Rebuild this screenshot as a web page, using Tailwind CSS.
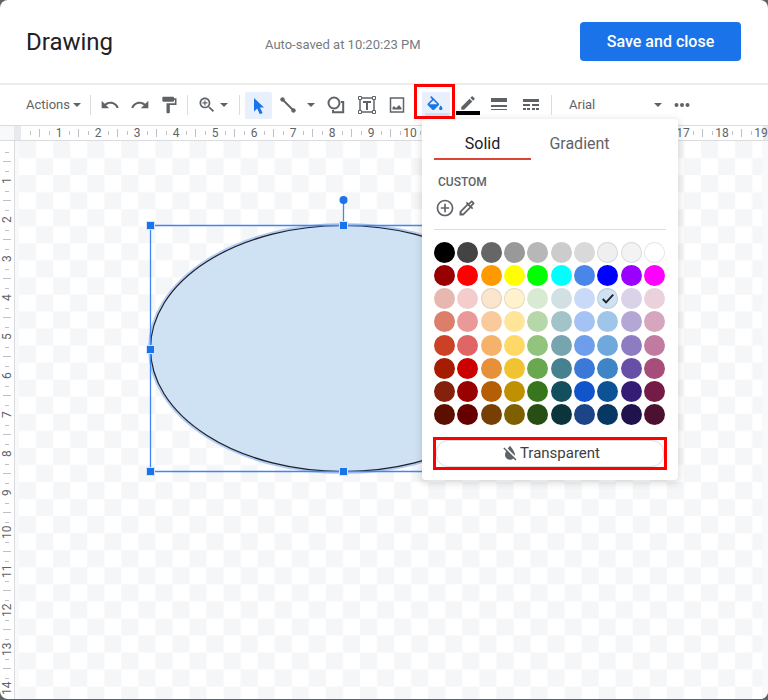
<!DOCTYPE html>
<html lang="en">
<head>
    <meta charset="utf-8"/>
    <meta content="width=device-width, initial-scale=1.0" name="viewport"/>
    <title>Drawing</title>
    <script src="https://cdn.jsdelivr.net/npm/@tailwindcss/browser@4"></script>
</head>
<body class="flex h-screen flex-col bg-[#5f6368] pb-px font-['Roboto',sans-serif] text-[#5f6368]">
    <main class="flex min-h-0 flex-1 flex-col overflow-hidden rounded-lg bg-white">
        <!-- Header -->
        <header class="flex h-[85px] shrink-0 items-center border-b-2 border-[#ededed] pl-[26px] pr-[27px]">
            <h1 class="w-[239px] text-2xl text-[#202124]">Drawing</h1>
            <p class="mt-[6px] text-[13px] text-[#777b80]">Auto-saved at 10:20:23 PM</p>
            <button class="ml-auto h-[39px] w-[161px] rounded bg-[#1a73e8] text-base font-medium text-white">Save and close</button>
        </header>

        <!-- Toolbar -->
        <div class="flex h-10 shrink-0 items-center">
            <button class="ml-[26px] flex w-14 items-center gap-[3px] text-[13px]">Actions
                <svg class="h-1 w-2 shrink-0" viewBox="0 0 8 4" fill="currentColor"><path d="M0 0h8L4 4z"/></svg>
            </button>
            <div class="ml-2 h-5 w-px bg-[#dadce0]"></div>
            <button class="ml-[9px]" aria-label="Undo">
                <svg class="size-5" viewBox="0 0 24 24" fill="currentColor"><path d="M12.500 8c-2.650 0-5.050.990-6.900 2.600L2 7v9h9l-3.620-3.620c1.390-1.160 3.160-1.880 5.120-1.880 3.540 0 6.550 2.310 7.600 5.500l2.370-.780C21.080 11.030 17.150 8 12.500 8z"/></svg>
            </button>
            <button class="ml-[10px]" aria-label="Redo">
                <svg class="size-5" viewBox="0 0 24 24" fill="currentColor"><path d="M18.400 10.600C16.550 8.990 14.150 8 11.500 8c-4.650 0-8.580 3.030-9.960 7.220L3.900 16c1.050-3.190 4.050-5.500 7.600-5.500 1.950 0 3.730.720 5.120 1.880L13 16h9V7l-3.600 3.600z"/></svg>
            </button>
            <button class="ml-[9px]" aria-label="Paint format">
                <svg class="size-5" viewBox="0 0 24 24" fill="currentColor"><path d="M18 4V3c0-.55-.45-1-1-1H5c-.55 0-1 .45-1 1v4c0 .55.45 1 1 1h12c.55 0 1-.45 1-1V6h1v4H9v11c0 .55.45 1 1 1h2c.55 0 1-.45 1-1v-9h8V4h-3z"/></svg>
            </button>
            <div class="ml-2 h-5 w-px bg-[#dadce0]"></div>
            <button class="ml-[9px] flex items-center gap-[3px]" aria-label="Zoom">
                <svg class="size-5" viewBox="0 0 24 24" fill="currentColor"><path d="M15.5 14h-.79l-.28-.27C15.41 12.59 16 11.11 16 9.5 16 5.91 13.09 3 9.5 3S3 5.91 3 9.500 5.910 16 9.500 16c1.610 0 3.090-.590 4.230-1.570l.270.280v.790l5 4.990L20.490 19l-4.990-5zm-6 0C7.010 14 5 11.990 5 9.500S7.010 5 9.500 5 14 7.010 14 9.500 11.990 14 9.500 14zM12.500 10.200h-2.300v2.300H8.800v-2.300H6.500V8.800h2.300V6.500h1.400v2.300h2.300z"/></svg>
                <svg class="h-1 w-2" viewBox="0 0 8 4" fill="currentColor"><path d="M0 0h8L4 4z"/></svg>
            </button>
            <div class="ml-[11px] h-5 w-px bg-[#dadce0]"></div>
            <button class="ml-[5px] size-[27px] rounded-xs bg-[#e8f0fe]" aria-label="Select">
                <svg class="size-[27px] text-[#1a73e8]" viewBox="0 0 27 27" fill="currentColor"><path d="M9 6v13.500l3.200-3 2.600 5.700 2.800-1.200-2.600-5.500H19z"/></svg>
            </button>
            <button class="ml-[6px]" aria-label="Line">
                <svg class="size-5" viewBox="0 0 20 20" fill="currentColor" stroke="currentColor"><path stroke-width="2" d="M4 4l12 12"/><circle cx="4.500" cy="4.500" r="1.800"/><circle cx="15.500" cy="15.500" r="1.800"/></svg>
            </button>
            <button class="ml-[9px]" aria-label="Line type">
                <svg class="h-1 w-2" viewBox="0 0 8 4" fill="currentColor"><path d="M0 0h8L4 4z"/></svg>
            </button>
            <button class="ml-[11px]" aria-label="Shape">
                <svg class="size-5" viewBox="0 0 20 20" fill="none" stroke="currentColor" stroke-width="2"><circle cx="8" cy="8" r="5.500"/><path d="M15 7h2.200v10.200H7V15"/></svg>
            </button>
            <button class="ml-[11px]" aria-label="Text box">
                <svg class="size-5" viewBox="0 0 20 20" fill="none" stroke="currentColor"><path stroke-width="1.500" d="M3 3h14v14H3z"/><path stroke-width="2" d="M6 7h8M10 7v8"/><path stroke-width="1" fill="white" d="M1.500 1.500h3v3h-3zM15.500 1.500h3v3h-3zM1.500 15.500h3v3h-3zM15.500 15.500h3v3h-3z"/></svg>
            </button>
            <button class="ml-[10px]" aria-label="Image">
                <svg class="size-5" viewBox="0 0 20 20" fill="currentColor"><path fill="none" stroke="currentColor" stroke-width="1.500" d="M3.500 3h13v14h-13z"/><path d="M5.500 14.500v-2l1.500-1.500 2 2 3-3 2.500 3v1.500z"/></svg>
            </button>

            <!-- Fill color with its open menu -->
            <div class="relative z-10 ml-[15px]">
                <button class="block h-[27px] w-7 rounded-xs bg-[#e8f0fe]" aria-label="Fill color">
                    <svg class="h-[27px] w-7 text-[#1a73e8]" viewBox="0 0 28 27" fill="currentColor"><path fill="#cfe2f3" d="M3 21h24v3H3z"/><path transform="translate(3 4) scale(.83)" d="M16.560 8.940L7.620 0 6.210 1.410l2.380 2.380-5.150 5.150c-.590.590-.590 1.540 0 2.120l5.500 5.500c.290.290.680.440 1.060.440s.770-.150 1.060-.440l5.500-5.500c.590-.580.590-1.530 0-2.120zM5.210 10L10 5.210 14.790 10H5.210zM19 11.500s-2 2.170-2 3.500c0 1.100.900 2 2 2s2-.900 2-2c0-1.330-2-3.500-2-3.500z"/></svg>
                </button>
                <div class="pointer-events-none absolute -left-2 -top-2 h-[35px] w-[41px] border-3 border-[#ff0000]"></div>

                <div class="absolute left-0 top-[27px] w-64 rounded bg-white px-3 pb-[10px] shadow-[0_2px_6px_2px_rgba(60,64,67,0.15)]">
                    <div class="flex h-[41px] pr-[36px] text-base" role="tablist">
                        <button role="tab" aria-selected="true" class="w-[97px] border-b-2 border-[#db4437] pt-3 text-[#202124]">Solid</button>
                        <button role="tab" aria-selected="false" class="w-[97px] border-b-2 border-transparent pt-3">Gradient</button>
                    </div>
                    <h2 class="mt-[14px] pl-1 text-xs font-medium leading-4">CUSTOM</h2>
                    <div class="flex h-[40px] gap-[2px] border-b border-[#dadce0] pl-px pt-[8px]">
                        <button class="size-5" aria-label="Add a custom color">
                            <svg class="size-5" viewBox="0 0 24 24" fill="currentColor"><path d="M13 7h-2v4H7v2h4v4h2v-4h4v-2h-4V7zm-1-5C6.480 2 2 6.480 2 12s4.480 10 10 10 10-4.480 10-10S17.520 2 12 2zm0 18c-4.410 0-8-3.590-8-8s3.590-8 8-8 8 3.590 8 8-3.590 8-8 8z"/></svg>
                        </button>
                        <button class="size-5" aria-label="Pick a color">
                            <svg class="size-5" viewBox="0 0 24 24" fill="currentColor"><path d="M17.660 5.410l.920.920-2.690 2.690-.920-.920 2.690-2.690M17.670 3c-.260 0-.510.100-.710.290l-3.120 3.120-1.930-1.910-1.410 1.410 1.420 1.420L3 16.250V21h4.750l8.920-8.920 1.420 1.420 1.410-1.410-1.920-1.920 3.120-3.120c.400-.400.400-1.030.010-1.420l-2.340-2.340c-.200-.190-.450-.290-.700-.290zM6.920 19L5 17.080l8.060-8.060 1.920 1.920L6.920 19z"/></svg>
                        </button>
                    </div>
                    <div id="palette" class="mr-px mt-3 grid h-[184px] grid-cols-[repeat(10,21px)] content-between justify-between"></div>
                    <div class="-mx-px mt-[11px] border-3 border-[#ff0000]">
                        <button class="flex h-[27px] w-full items-center justify-center rounded-xl border border-[#dadce0] text-[15px] text-[#3c4043]">
                            <svg class="size-5 text-[#5f6368]" viewBox="0 0 24 24" fill="currentColor"><path d="M18 14c0-4-6-10.800-6-10.800s-1.330 1.510-2.730 3.520l8.590 8.590c.090-.420.140-.860.140-1.310zm-.880 3.120L12.500 12.500 5.270 5.270 4 6.550l3.320 3.320C6.550 11.320 6 12.790 6 14c0 3.310 2.690 6 6 6 1.520 0 2.900-.570 3.950-1.500l2.630 2.630 1.270-1.270-2.730-2.740z"/></svg>
                            Transparent
                        </button>
                    </div>
                </div>
            </div>

            <button class="ml-[6px]" aria-label="Border color">
                <svg class="h-[27px] w-6" viewBox="0 0 24 27" fill="currentColor"><path transform="translate(3 2) scale(.75)" d="M3 17.250V21h3.750L17.810 9.940l-3.750-3.750L3 17.250zM20.710 7.040c.390-.390.390-1.020 0-1.410l-2.340-2.340c-.390-.390-1.020-.390-1.410 0l-1.830 1.830 3.750 3.750 1.830-1.830z"/><path fill="black" d="M0 19h24v4H0z"/></svg>
            </button>
            <button class="ml-[9px]" aria-label="Border weight">
                <svg class="size-5" viewBox="0 0 20 20" fill="currentColor"><path d="M2 3h16v4H2zM2 10h16v2H2zM2 14h16v1H2z"/></svg>
            </button>
            <button class="ml-3" aria-label="Border dash">
                <svg class="size-5" viewBox="0 0 20 20" fill="currentColor"><path d="M2 4h16v3H2zM2 9h7v2H2zM11 9h7v2h-7zM2 13h3v2H2zM6 13h3v2H6zM11 13h3v2h-3zM15 13h3v2h-3z"/></svg>
            </button>
            <div class="ml-[10px] h-5 w-px bg-[#dadce0]"></div>
            <div class="ml-[17px] flex items-center">
                <select aria-label="Font" class="w-[85px] appearance-none text-[13px]">
                    <option>Arial</option>
                </select>
                <svg class="h-1 w-2" viewBox="0 0 8 4" fill="currentColor"><path d="M0 0h8L4 4z"/></svg>
            </div>
            <button class="ml-[10px]" aria-label="More">
                <svg class="size-5" viewBox="0 0 20 20" fill="currentColor"><circle cx="4.500" cy="10" r="2"/><circle cx="10" cy="10" r="2"/><circle cx="15.500" cy="10" r="2"/></svg>
            </button>
        </div>

        <!-- Horizontal ruler -->
        <div class="flex h-4 shrink-0 border-y border-[#dadce0]">
            <div class="w-[14px] shrink-0 bg-[#f8f9fa]"></div>
            <div class="w-[7px] shrink-0 bg-[#e8eaed]"></div>
            <div id="ruler-x" class="relative z-1 flex min-w-0 flex-1"></div>
            <div class="w-[5px] shrink-0 bg-[#e8eaed]"></div>
        </div>

        <div class="flex min-h-0 flex-1">
            <!-- Vertical ruler -->
            <div id="ruler-y" class="flex w-[15px] shrink-0 flex-col border-r border-[#dadce0] pt-px"></div>

            <!-- Canvas -->
            <div class="min-w-0 flex-1 bg-[#f8f9fa] pl-1 pr-[6px]">
                <svg class="h-full w-full">
                    <defs>
                        <pattern id="checker" width="34.100" height="34.100" patternUnits="userSpaceOnUse">
                            <path fill="white" d="M0 0h34.100v34.100H0z"/>
                            <path fill="#f5f6f8" d="M0 0h17.050v17.050H0zM17.050 17.050H34.100V34.100H17.050z"/>
                        </pattern>
                    </defs>
                    <rect width="100%" height="100%" fill="url(#checker)"/>
                    <g transform="translate(-19 -141)">
                        <ellipse cx="343.500" cy="348.500" rx="193" ry="123" fill="#cfe2f3" stroke="#b0cbf7" stroke-width="5"/>
                        <ellipse cx="343.500" cy="348.500" rx="193" ry="123" fill="#cfe2f3" stroke="#202124" stroke-width="1.200"/>
                        <path fill="none" stroke="#4285f4" stroke-width="1.300" d="M150.500 225.500h386v246h-386zM343.500 200v25"/>
                        <circle cx="343.500" cy="200" r="4" fill="#1a73e8"/>
                        <g fill="#1a73e8" stroke="#d2e3fc">
                            <rect x="146.500" y="221.500" width="8" height="8"/>
                            <rect x="339.500" y="221.500" width="8" height="8"/>
                            <rect x="146.500" y="345.500" width="8" height="8"/>
                            <rect x="146.500" y="467.500" width="8" height="8"/>
                            <rect x="339.500" y="467.500" width="8" height="8"/>
                        </g>
                    </g>
                </svg>
            </div>
        </div>
    </main>

    <script>
        const colors = [
            ['#000000', '#434343', '#666666', '#999999', '#b7b7b7', '#cccccc', '#d9d9d9', '#efefef', '#f3f3f3', '#ffffff'],
            ['#980000', '#ff0000', '#ff9900', '#ffff00', '#00ff00', '#00ffff', '#4a86e8', '#0000ff', '#9900ff', '#ff00ff'],
            ['#e6b8af', '#f4cccc', '#fce5cd', '#fff2cc', '#d9ead3', '#d0e0e3', '#c9daf8', '#cfe2f3', '#d9d2e9', '#ead1dc'],
            ['#dd7e6b', '#ea9999', '#f9cb9c', '#ffe599', '#b6d7a8', '#a2c4c9', '#a4c2f4', '#9fc5e8', '#b4a7d6', '#d5a6bd'],
            ['#cc4125', '#e06666', '#f6b26b', '#ffd966', '#93c47d', '#76a5af', '#6d9eeb', '#6fa8dc', '#8e7cc3', '#c27ba0'],
            ['#a61c00', '#cc0000', '#e69138', '#f1c232', '#6aa84f', '#45818e', '#3c78d8', '#3d85c6', '#674ea7', '#a64d79'],
            ['#85200c', '#990000', '#b45f06', '#bf9000', '#38761d', '#134f5c', '#1155cc', '#0b5394', '#351c75', '#741b47'],
            ['#5b0f00', '#660000', '#783f04', '#7f6000', '#274e13', '#0c343d', '#1c4587', '#073763', '#20124d', '#4c1130']
        ];
        const selected = '#cfe2f3';
        const outlined = ['#efefef', '#f3f3f3', '#ffffff', '#fce5cd', '#fff2cc', '#cfe2f3'];
        const check = '<svg class="size-full" viewBox="0 0 20 20" fill="none" stroke="#202124" stroke-width="2"><path d="M5 10.500l3.500 3.500L16 6"/></svg>';

        const palette = document.getElementById('palette');
        colors.flat().forEach(color => {
            const swatch = document.createElement('button');
            swatch.className = 'size-[21px] rounded-full';
            if (outlined.includes(color)) {
                swatch.className = 'size-[21px] rounded-full border border-black/10';
            }
            swatch.style.backgroundColor = color;
            swatch.setAttribute('aria-label', color);
            if (color === selected) {
                swatch.innerHTML = check;
            }
            palette.appendChild(swatch);
        });

        // each ruler unit: small tick, big tick, small tick, number
        const rulerX = document.getElementById('ruler-x');
        const rulerY = document.getElementById('ruler-y');
        for (let i = 1; i <= 19; i++) {
            rulerX.insertAdjacentHTML('beforeend', `
                <div class="flex w-[39px] shrink-0 items-center pl-[9px] text-xs leading-none">
                    <i class="h-1 w-px bg-[#bdc1c6]"></i>
                    <i class="ml-2 h-2 w-px bg-[#bdc1c6]"></i>
                    <i class="ml-[9px] h-1 w-px bg-[#bdc1c6]"></i>
                    <span class="-mr-2 flex w-[18px] shrink-0 justify-center">${i}</span>
                </div>`);
        }
        for (let i = 1; i <= 14; i++) {
            rulerY.insertAdjacentHTML('beforeend', `
                <div class="flex h-[39px] shrink-0 flex-col items-center pt-[10px] text-xs leading-none">
                    <i class="h-px w-1 shrink-0 bg-[#bdc1c6]"></i>
                    <i class="mt-2 h-px w-2 shrink-0 bg-[#bdc1c6]"></i>
                    <i class="mt-[9px] h-px w-1 shrink-0 bg-[#bdc1c6]"></i>
                    <span class="-mb-2 flex h-[18px] shrink-0 rotate-180 items-center justify-center [writing-mode:vertical-rl]">${i}</span>
                </div>`);
        }
    </script>
</body>
</html>
